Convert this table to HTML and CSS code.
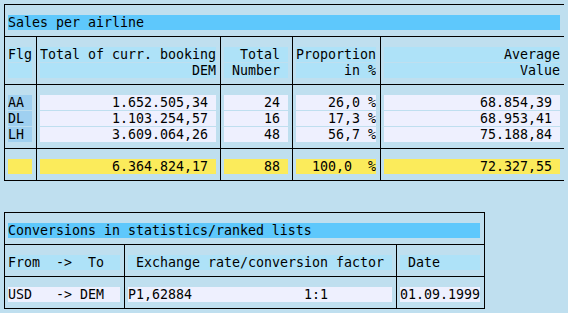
FILE: index.html
```html
<!DOCTYPE html>
<html lang="en">
<head>
    <meta charset="UTF-8">
    <title>Sales per airline</title>
    <link rel="stylesheet" href="styles.css">
</head>
<body>
    <div class="list">
        <div class="band">
            <div class="col"><div class="cell title w69">Sales per airline</div></div>
        </div>
        <div class="band">
            <div class="col">
                <div class="cell head w3">Flg</div>
                <div class="cell head w3"></div>
            </div>
            <div class="col">
                <div class="cell head w22">Total of curr. booking</div>
                <div class="cell head w22">                   DEM</div>
            </div>
            <div class="col">
                <div class="cell head w8">  Total </div>
                <div class="cell head w8"> Number </div>
            </div>
            <div class="col">
                <div class="cell head w10">Proportion</div>
                <div class="cell head w10">      in %</div>
            </div>
            <div class="col">
                <div class="cell head w22">               Average</div>
                <div class="cell head w22">                 Value</div>
            </div>
        </div>
        <div class="band">
            <div class="col">
                <div class="cell key w3">AA</div>
                <div class="cell key w3">DL</div>
                <div class="cell key w3">LH</div>
            </div>
            <div class="col">
                <div class="cell val w22">         1.652.505,34 </div>
                <div class="cell val w22">         1.103.254,57 </div>
                <div class="cell val w22">         3.609.064,26 </div>
            </div>
            <div class="col">
                <div class="cell val w8">     24 </div>
                <div class="cell val w8">     16 </div>
                <div class="cell val w8">     48 </div>
            </div>
            <div class="col">
                <div class="cell val w10">    26,0 %</div>
                <div class="cell val w10">    17,3 %</div>
                <div class="cell val w10">    56,7 %</div>
            </div>
            <div class="col">
                <div class="cell val w22">            68.854,39 </div>
                <div class="cell val w22">            68.953,41 </div>
                <div class="cell val w22">            75.188,84 </div>
            </div>
        </div>
        <div class="band">
            <div class="col"><div class="cell sum w3"></div></div>
            <div class="col"><div class="cell sum w22">         6.364.824,17 </div></div>
            <div class="col"><div class="cell sum w8">     88 </div></div>
            <div class="col"><div class="cell sum w10">  100,0  %</div></div>
            <div class="col"><div class="cell sum w22">            72.327,55 </div></div>
        </div>
    </div>

    <div class="list">
        <div class="band">
            <div class="col"><div class="cell title w59">Conversions in statistics/ranked lists</div></div>
        </div>
        <div class="band">
            <div class="col"><div class="cell head w14">From  ->  To</div></div>
            <div class="col"><div class="cell head w33"> Exchange rate/conversion factor</div></div>
            <div class="col"><div class="cell head w10"> Date</div></div>
        </div>
        <div class="band">
            <div class="col"><div class="cell val w14">USD   -> DEM</div></div>
            <div class="col"><div class="cell val w33">P1,62884              1:1</div></div>
            <div class="col"><div class="cell val w10">01.09.1999</div></div>
        </div>
    </div>
</body>
</html>
```
FILE: styles.css
```css
body { margin: 4px; background: #bfdfef; color: #000; font-family: "DejaVu Sans Mono", monospace; font-size: 13.29px; }
.list { display: flex; flex-direction: column; width: max-content; border: 1px solid #000; }
.list + .list { margin-top: 31px; }
.band { display: flex; border-top: 1px solid #000; }
.band:first-child { border-top: 0; }
.col { padding: 10px 4px 5px 3px; border-left: 1px solid #000; }
.col:first-child { border-left: 0; }
.cell { height: 15px; line-height: 15px; margin-bottom: 1px; white-space: pre; overflow: hidden; }
.title { background: #5ec8fc; }
.head { background: #aee2f8; }
.key { background: #9fd0f0; }
.val { background: #eef0fe; }
.sum { background: #fbeb5b; }
.w3 { width: 24px; }
.w8 { width: 64px; }
.w10 { width: 80px; }
.w14 { width: 112px; }
.w22 { width: 176px; }
.w33 { width: 264px; }
.w59 { width: 472px; }
.w69 { width: 552px; }
```
